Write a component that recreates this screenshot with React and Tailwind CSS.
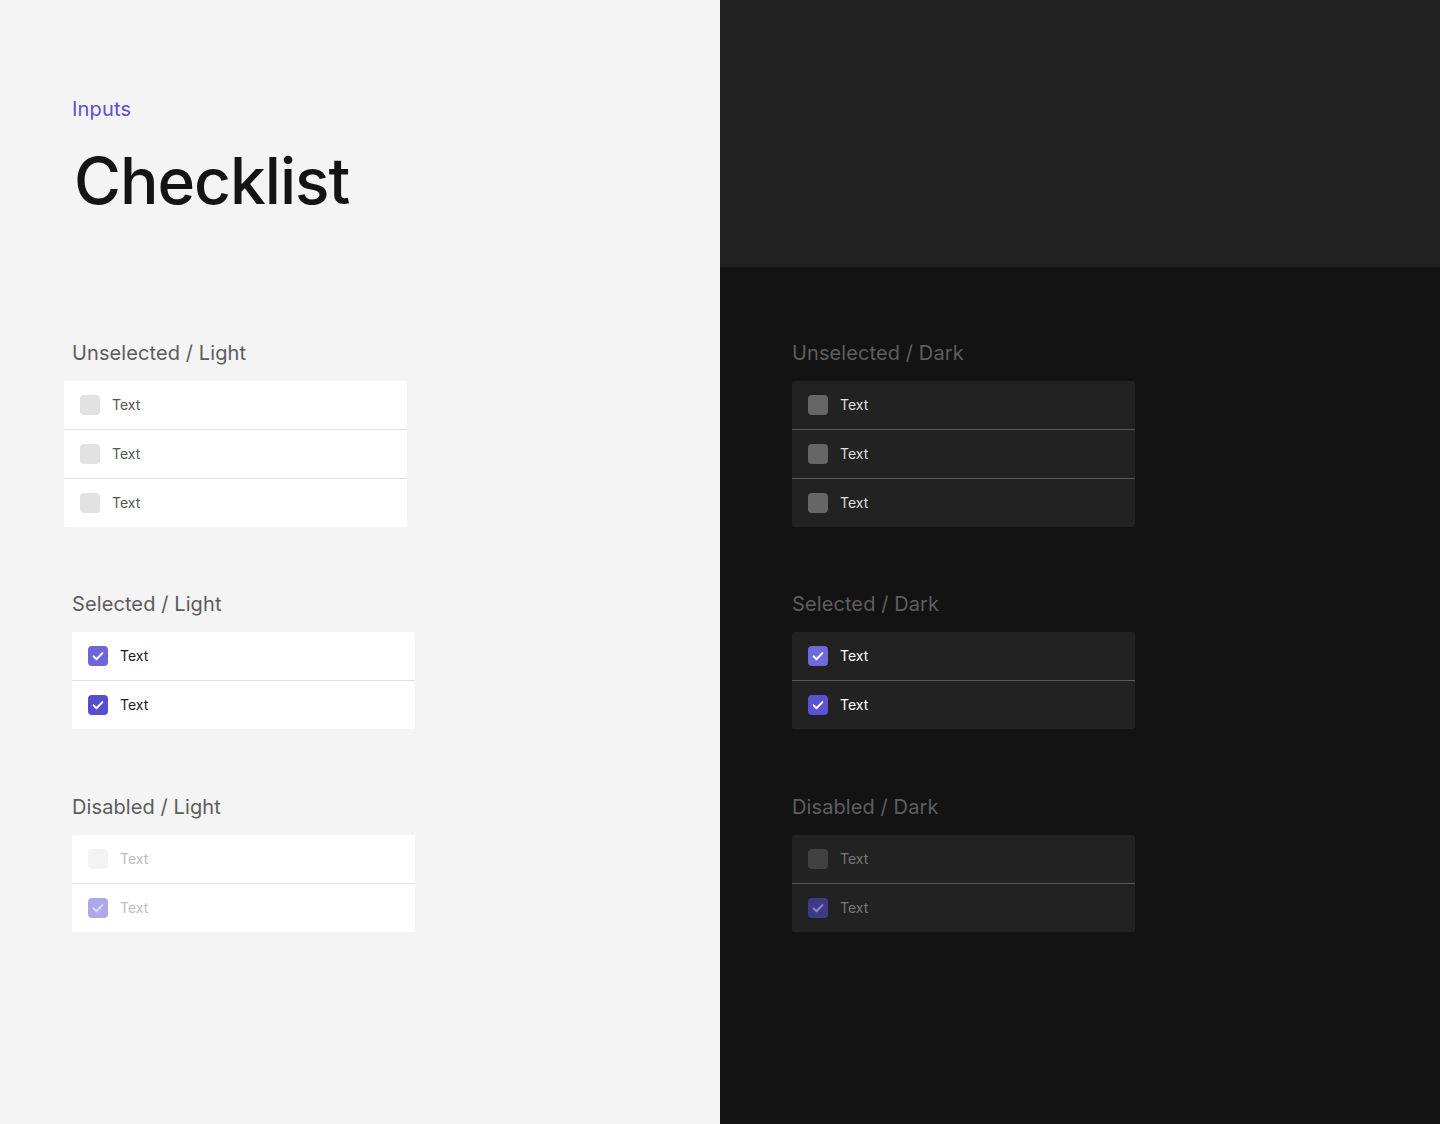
const FONT = { fontFamily: 'Inter, "Open Sans", sans-serif' };

const THEMES = {
  light: {
    card: 'bg-white',
    divider: 'bg-[#e2e2e2]',
    title: 'text-[#5c5c5c]',
    box: {
      unchecked: 'bg-[#e2e2e2]',
      checked1: 'bg-[#6f67d9]',
      checked2: 'bg-[#574ecf]',
      disabled: 'bg-[#f3f3f3]',
      disabledChecked: 'bg-[#aea9eb]',
    },
    text: {
      unchecked: 'text-[#555555]',
      checked: 'text-[#1c1c1c]',
      disabled: 'text-[#bdbdbd]',
    },
    disabledTick: 'text-[#dcdaf7]',
  },
  dark: {
    card: 'bg-[#222222]',
    divider: 'bg-[#5a5a5a]',
    title: 'text-[#5e5e5e]',
    box: {
      unchecked: 'bg-[#666666]',
      checked1: 'bg-[#7069da]',
      checked2: 'bg-[#5a51d3]',
      disabled: 'bg-[#414141]',
      disabledChecked: 'bg-[#3f3a86]',
    },
    text: {
      unchecked: 'text-[#dedede]',
      checked: 'text-white',
      disabled: 'text-[#777777]',
    },
    disabledTick: 'text-[#8b86c4]',
  },
};

function Check({ className = 'text-white' }) {
  return (
    <svg viewBox="0 0 20 20" className={`w-5 h-5 ${className}`} fill="none">
      <path d="M5.6 10.4l2.9 2.9 5.9-6.2" stroke="currentColor" strokeWidth="2" strokeLinecap="round" strokeLinejoin="round" />
    </svg>
  );
}

function Row({ theme, kind, box, tick }) {
  const t = THEMES[theme];
  const textCls =
    kind === 'checked' ? t.text.checked : kind === 'disabled' ? t.text.disabled : t.text.unchecked;
  return (
    <div className="flex items-center h-12 pl-4">
      <div className={`w-5 h-5 rounded-[4px] flex-shrink-0 ${box}`}>
        {tick && <Check className={tick} />}
      </div>
      <span className={`ml-3 text-[14px] leading-none ${textCls}`}>Text</span>
    </div>
  );
}

function Section({ theme, title, rows, shift, className = '' }) {
  const t = THEMES[theme];
  return (
    <section className={className}>
      <h2 className={`text-[20px] leading-7 tracking-[0.1px] ${t.title}`}>{title}</h2>
      <div className={`mt-[14px] w-[343px] rounded-[2px] ${t.card} ${shift ? '-ml-2' : ''}`}>
        {rows.map((r, i) => (
          <div key={i}>
            {i > 0 && <div className={`h-px ${t.divider}`} />}
            <Row theme={theme} {...r} />
          </div>
        ))}
      </div>
    </section>
  );
}

function Column({ theme }) {
  const t = THEMES[theme];
  const name = theme === 'light' ? 'Light' : 'Dark';
  return (
    <div className="flex flex-col">
      <Section
        theme={theme}
        title={`Unselected / ${name}`}
        shift={theme === 'light'}
        className="mt-[72px]"
        rows={[
          { kind: 'unchecked', box: t.box.unchecked },
          { kind: 'unchecked', box: t.box.unchecked },
          { kind: 'unchecked', box: t.box.unchecked },
        ]}
      />
      <Section
        theme={theme}
        title={`Selected / ${name}`}
        className="mt-[63px]"
        rows={[
          { kind: 'checked', box: t.box.checked1, tick: 'text-white' },
          { kind: 'checked', box: t.box.checked2, tick: 'text-white' },
        ]}
      />
      <Section
        theme={theme}
        title={`Disabled / ${name}`}
        className="mt-[64px]"
        rows={[
          { kind: 'disabled', box: t.box.disabled },
          { kind: 'disabled', box: t.box.disabledChecked, tick: t.disabledTick },
        ]}
      />
    </div>
  );
}

export default function App() {
  return (
    <div className="grid grid-cols-2 w-[1440px] h-[1124px] overflow-hidden" style={FONT}>
      {/* Light side */}
      <div className="bg-[#f4f4f4] pl-[72px]">
        <header className="h-[267px] pt-[95px]">
          <p className="text-[20px] leading-7 text-[#5a50d6] tracking-[0.2px]">Inputs</p>
          <h1 className="mt-[18px] ml-[2px] text-[64px] leading-[80px] font-medium text-[#141414] tracking-[-1px]">
            Checklist
          </h1>
        </header>
        <Column theme="light" />
      </div>

      {/* Dark side */}
      <div className="bg-[#131313]">
        <div className="h-[267px] bg-[#222222]" />
        <div className="pl-[72px]">
          <Column theme="dark" />
        </div>
      </div>
    </div>
  );
}
